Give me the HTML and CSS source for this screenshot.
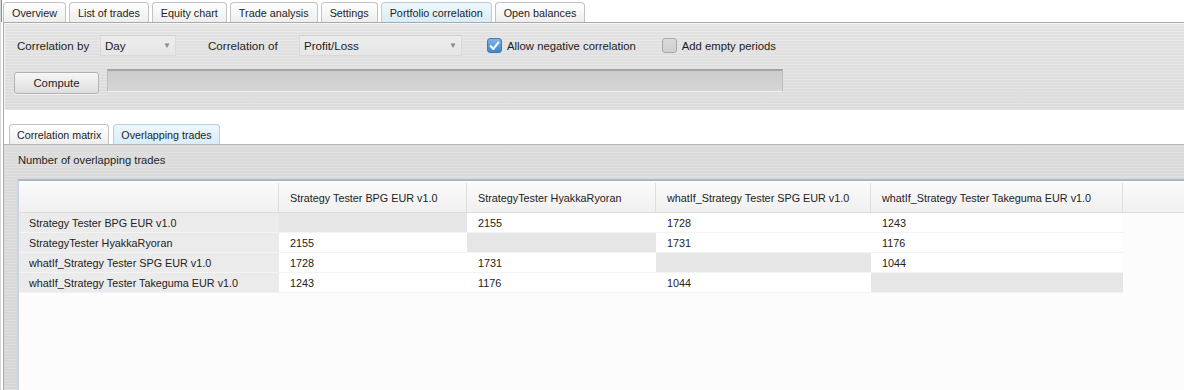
FILE: index.html
```html
<!DOCTYPE html>
<html>
<head>
<meta charset="utf-8">
<link rel="stylesheet" href="styles.css">
</head>
<body>
<div class="window">
  <div class="tabbar main-tabs">
    <div class="tab">Overview</div>
    <div class="tab">List of trades</div>
    <div class="tab">Equity chart</div>
    <div class="tab">Trade analysis</div>
    <div class="tab">Settings</div>
    <div class="tab active">Portfolio correlation</div>
    <div class="tab">Open balances</div>
  </div>
  <div class="top-panel">
    <div class="row controls">
      <span class="label lbl-by">Correlation by</span>
      <div class="select sel-day"><span>Day</span><span class="arrow">▼</span></div>
      <span class="label lbl-of">Correlation of</span>
      <div class="select sel-pl"><span>Profit/Loss</span><span class="arrow">▼</span></div>
      <label class="check chk-neg"><span class="box checked"><svg width="14" height="14" viewBox="0 0 14 14"><path d="M3 7.2 L5.8 10.2 L11.2 3.2" fill="none" stroke="#fff" stroke-width="2.2" stroke-linecap="round" stroke-linejoin="round"/></svg></span>Allow negative correlation</label>
      <label class="check chk-empty"><span class="box"></span>Add empty periods</label>
    </div>
    <div class="row actions">
      <button class="btn">Compute</button>
      <div class="progress"></div>
    </div>
  </div>
  <div class="gap-area">
    <div class="tabbar sub-tabs">
      <div class="tab">Correlation matrix</div>
      <div class="tab active">Overlapping trades</div>
    </div>
  </div>
  <div class="sub-panel">
    <div class="title">Number of overlapping trades</div>
    <div class="table-box">
      <div class="grid">
        <div class="th"></div>
        <div class="th">Strategy Tester BPG EUR v1.0</div>
        <div class="th">StrategyTester HyakkaRyoran</div>
        <div class="th">whatIf_Strategy Tester SPG EUR v1.0</div>
        <div class="th">whatIf_Strategy Tester Takeguma EUR v1.0</div>
        <div class="th filler"></div>

        <div class="rh">Strategy Tester BPG EUR v1.0</div>
        <div class="td diag"></div>
        <div class="td">2155</div>
        <div class="td">1728</div>
        <div class="td">1243</div>
        <div class="empty"></div>

        <div class="rh">StrategyTester HyakkaRyoran</div>
        <div class="td">2155</div>
        <div class="td diag"></div>
        <div class="td">1731</div>
        <div class="td">1176</div>
        <div class="empty"></div>

        <div class="rh">whatIf_Strategy Tester SPG EUR v1.0</div>
        <div class="td">1728</div>
        <div class="td">1731</div>
        <div class="td diag"></div>
        <div class="td">1044</div>
        <div class="empty"></div>

        <div class="rh">whatIf_Strategy Tester Takeguma EUR v1.0</div>
        <div class="td">1243</div>
        <div class="td">1176</div>
        <div class="td">1044</div>
        <div class="td diag"></div>
        <div class="empty"></div>
      </div>
    </div>
  </div>
</div>
</body>
</html>
```

FILE: styles.css
```css
* { box-sizing: border-box; }
html, body { margin: 0; padding: 0; }
body {
  width: 1184px;
  height: 390px;
  overflow: hidden;
  font-family: "Liberation Sans", Arial, sans-serif;
  font-size: 11px;
  color: #1a1a1a;
  background: #ffffff;
}
.window {
  height: 390px;
  display: flex;
  flex-direction: column;
  border-left: 1px solid #d6d6d6;
  background: #ffffff;
}

/* tabs */
.tabbar { display: flex; align-items: flex-end; gap: 3px; }
.main-tabs { height: 22px; padding-left: 1px; border-left: 1px solid #8e8e8e; }
.tab {
  height: 20px;
  padding: 0 8px;
  display: flex;
  align-items: center;
  font-size: 10.8px;
  color: #1e1e1e;
  border: 1px solid #c2c2c2;
  border-bottom: none;
  border-radius: 4px 4px 0 0;
  background: linear-gradient(#ffffff, #eeeeee);
}
.tab.active {
  background: linear-gradient(#eef7fd, #d8ecf9);
  border-color: #b9cfdf;
}

/* top panel */
.top-panel {
  height: 88px;
  margin-left: 2px;
  border-top: 1px solid #a9a9a9;
  border-left: 1px solid #a9a9a9;
  box-shadow: inset 1px 1px 0 #f6f6f6;
  background:
    repeating-linear-gradient(0deg, rgba(255,255,255,0.12) 0 1px, rgba(0,0,0,0.015) 1px 3px),
    linear-gradient(#e6e6e6, #dfdfdf);
  padding: 12px 0 0 10px;
  font-size: 11.6px;
}
.row { display: flex; align-items: center; }
.controls { height: 21px; }
.label { color: #1e1e1e; }
.lbl-by { margin-left: 3px; width: 83px; }
.lbl-of { margin-left: 32px; width: 91px; }
.select {
  height: 21px;
  display: flex;
  align-items: center;
  justify-content: space-between;
  padding: 0 4px 0 4px;
  background: linear-gradient(#ececec, #e6e6e6);
  border: 1px solid #d9d9d9;
  border-top-color: #cfcfcf;
}
.sel-day { width: 76px; }
.sel-pl { width: 163px; }
.arrow { font-size: 8px; color: #8a8a8a; }
.check { display: flex; align-items: center; font-size: 11.3px; }
.chk-neg { margin-left: 25px; }
.chk-empty { margin-left: 26px; }
.box {
  width: 15px; height: 15px;
  margin-right: 5px;
  border-radius: 3px;
  border: 1px solid #a8a8a8;
  background: linear-gradient(#dadada, #cfcfcf);
  display: flex; align-items: center; justify-content: center;
}
.box.checked {
  border-color: #3e7cb5;
  background: linear-gradient(#7fb4e4, #3f86c9);
}
.box svg { display: block; }
.actions { margin-top: 13px; align-items: flex-start; }
.btn {
  width: 85px;
  height: 22px;
  margin-top: 3px;
  font-family: "Liberation Sans", Arial, sans-serif;
  font-size: 11.4px;
  color: #1e1e1e;
  border: 1px solid #b2b2b2;
  border-radius: 3px;
  background: linear-gradient(#f6f6f6, #dedede);
  box-shadow: 0 1px 0 #f4f4f4;
  padding: 0;
}
.progress {
  width: 676px;
  height: 23px;
  margin-left: 8px;
  background: linear-gradient(#cdcdcd, #d5d5d5);
  border: 1px solid #bdbdbd;
  border-top: 2px solid #a5a5a5;
  border-bottom: 1px solid #f2f2f2;
}

/* white gap with sub tabs */
.gap-area {
  height: 34px;
  margin-left: 2px;
  border-left: 1px solid #a9a9a9;
  background: #ffffff;
  display: flex;
  align-items: flex-end;
}
.sub-tabs { padding-left: 5px; gap: 4px; }
.sub-tabs .tab { font-size: 10.7px; padding: 0 7px; }

/* sub panel */
.sub-panel {
  flex: 1;
  margin-left: 2px;
  border-left: 1px solid #a9a9a9;
  display: flex;
  flex-direction: column;
  min-height: 0;
  background:
    repeating-linear-gradient(0deg, rgba(255,255,255,0.1) 0 1px, rgba(0,0,0,0.015) 1px 3px),
    linear-gradient(#dedede, #d9d9d9);
  border-top: 1px solid #b5b5b5;
  padding-left: 1px;
}
.title {
  height: 34px;
  padding: 9px 0 0 13px;
  font-size: 11.2px;
  color: #1e1e1e;
}
.table-box {
  flex: 1;
  margin-left: 12px;
  border-top: 2px solid #a6b8c8;
  border-left: 2px solid #c3d5e6;
  background: #fcfcfc;
  padding: 2px 0 0 0;
  overflow: hidden;
}
.grid {
  display: grid;
  grid-template-columns: 260px 188px 189px 215px 252px 1fr;
  grid-template-rows: 30px repeat(4, 20px);
  font-size: 10.8px;
}
.th {
  display: flex;
  align-items: center;
  padding-left: 11px;
  background: linear-gradient(#fafafa, #f0f0f0);
  border-right: 1px solid #dedede;
  border-bottom: 1px solid #dcdcdc;
  white-space: nowrap;
  color: #222;
}
.th.filler { border-right: none; }
.rh, .td {
  display: flex;
  align-items: center;
  padding-left: 11px;
  border-bottom: 1px solid #f3f3f3;
  white-space: nowrap;
  color: #222;
}
.rh { background: #ebebeb; padding-left: 10px; }
.td { background: #ffffff; }
.td.diag { background: #e6e6e6; }
.empty { background: #fcfcfc; }
```
